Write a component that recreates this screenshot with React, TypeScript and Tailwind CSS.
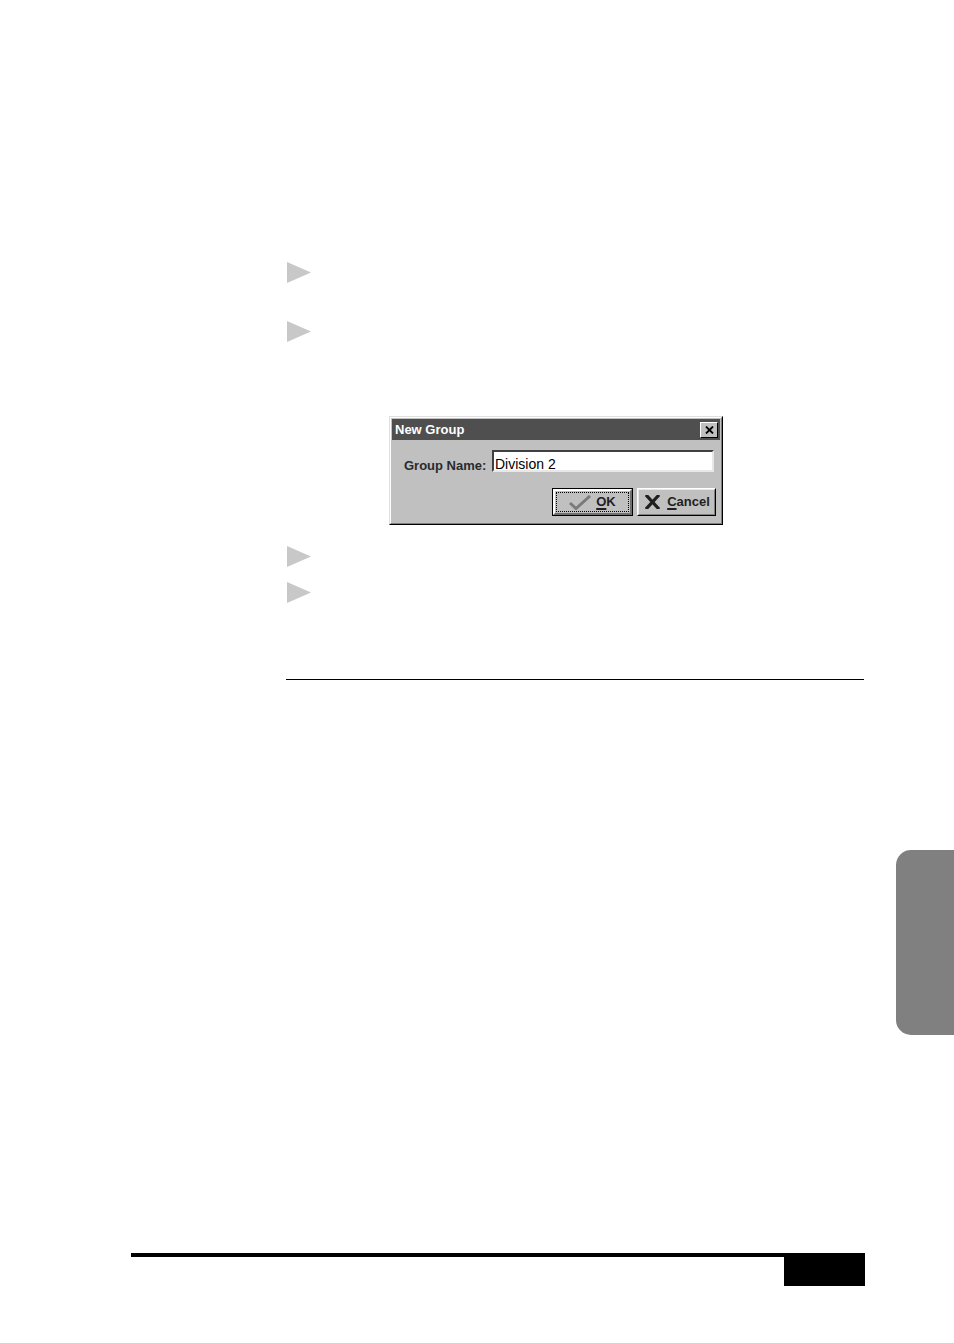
import React from 'react';

function Bullet({ className = '' }: { className?: string }) {
  return (
    <svg className={`shrink-0 ${className}`} width="24" height="21" viewBox="0 0 24 21">
      <polygon points="0,0 24,10.5 0,21" fill="#c8c8c8" />
    </svg>
  );
}

function CheckIcon() {
  return (
    <svg width="22" height="15" viewBox="0 0 22 15">
      <polyline points="1,8 7,13.5 21,1" fill="none" stroke="#7a7a7a" strokeWidth="3" strokeLinejoin="miter" />
    </svg>
  );
}

function CrossIcon() {
  return (
    <svg width="15" height="14" viewBox="0 0 15 14">
      <path d="M2 1 L13 13 M13 1 L2 13" stroke="#1f1f1f" strokeWidth="3.2" strokeLinecap="square" />
    </svg>
  );
}

function NewGroupDialog() {
  return (
    <div className="ml-[389px] w-[334px] h-[109px] shrink-0 border border-t-[#dfdfdf] border-l-[#dfdfdf] border-r-black border-b-black bg-[#c0c0c0]">
      <div className="h-full border border-t-white border-l-white border-r-[#808080] border-b-[#808080] p-px flex flex-col">
        {/* title bar */}
        <div className="h-[21px] bg-[#4f4f4f] flex items-center justify-between pl-[3px] pr-[2px]">
          <span className="text-white text-[13px] font-bold leading-[16px]">New Group</span>
          <div className="w-[18px] h-[16px] bg-[#c0c0c0] border border-t-white border-l-white border-r-black border-b-black flex items-center justify-center">
            <svg width="9" height="8" viewBox="0 0 9 8">
              <path d="M1 0.5 L8 7.5 M8 0.5 L1 7.5" stroke="#000" strokeWidth="1.8" />
            </svg>
          </div>
        </div>

        {/* name row */}
        <div className="mt-[10px] flex items-start pl-[12px] pr-[6px]">
          <span className="mt-[8px] text-[13px] font-bold leading-[16px] text-[#2b2b2b]">Group Name:</span>
          <div className="ml-auto w-[222px] h-[22px] bg-white border-2 border-t-[#404040] border-l-[#404040] border-r-[#e8e8e8] border-b-[#e8e8e8] pl-px">
            <span className="text-[14px] leading-[16px] text-black">Division 2</span>
          </div>
        </div>

        {/* buttons */}
        <div className="mt-[14px] flex justify-end gap-[4px] pr-[4px]">
          <div className="w-[81px] h-[28px] border border-black">
            <div className="h-full border-2 border-t-white border-l-white border-r-[#707070] border-b-[#707070] p-px">
              <div className="h-full border border-dotted border-black flex items-center justify-center gap-[5px]">
                <CheckIcon />
                <span className="text-[13px] font-bold leading-[16px] text-[#1f1f1f]">
                  <span className="underline decoration-2 underline-offset-2">O</span>K
                </span>
              </div>
            </div>
          </div>
          <div className="w-[79px] h-[28px] border border-t-white border-l-white border-r-black border-b-black">
            <div className="h-full border border-t-[#e8e8e8] border-l-[#e8e8e8] border-r-[#808080] border-b-[#808080] flex items-center justify-center gap-[7px] pl-[2px]">
              <CrossIcon />
              <span className="text-[13px] font-bold leading-[16px] text-[#1f1f1f]">
                <span className="underline decoration-2 underline-offset-2">C</span>ancel
              </span>
            </div>
          </div>
        </div>
      </div>
    </div>
  );
}

export default function App() {
  return (
    <div
      className="w-[954px] h-[1343px] bg-white overflow-hidden flex flex-col"
      style={{ fontFamily: '"Liberation Sans", Arial, sans-serif' }}
    >
      <Bullet className="mt-[262px] ml-[287px]" />
      <Bullet className="mt-[38px] ml-[287px]" />

      <div className="mt-[74px]">
        <NewGroupDialog />
      </div>

      <Bullet className="mt-[21px] ml-[287px]" />
      <Bullet className="mt-[15px] ml-[287px]" />

      <div className="mt-[76px] ml-[286px] w-[578px] h-px bg-black shrink-0" />

      {/* thumb index tab */}
      <div className="mt-[170px] ml-auto w-[58px] h-[185px] rounded-l-[15px] bg-[#808080] shrink-0" />

      {/* footer */}
      <div className="mt-[218px] ml-[131px] w-[734px] border-t-4 border-black flex justify-end shrink-0">
        <div className="w-[81px] h-[29px] bg-black" />
      </div>
    </div>
  );
}
